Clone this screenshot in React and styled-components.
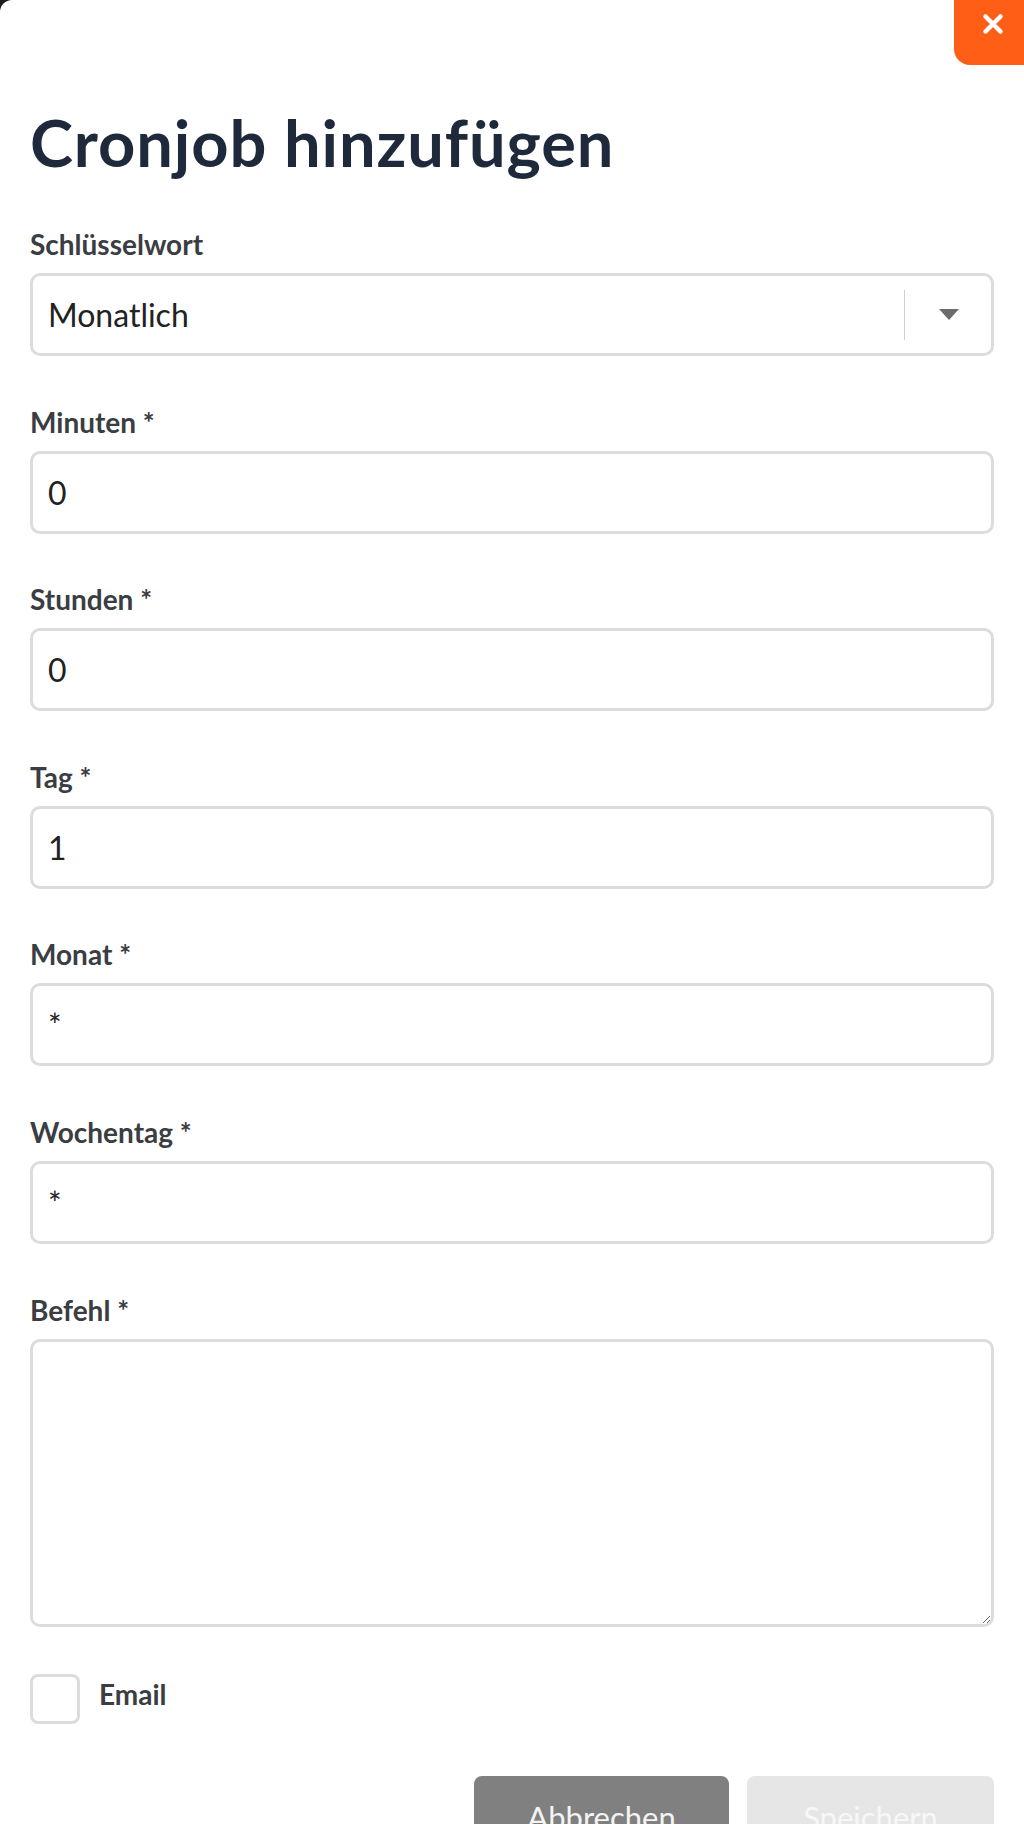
import React from "react";
import styled, { createGlobalStyle } from "styled-components";

const Global = createGlobalStyle`
  html, body { margin: 0; padding: 0; background: #1c1c1c; }
  body { font-family: Lato, "Noto Sans", sans-serif; }
  * { box-sizing: border-box; }
`;

const Modal = styled.div`
  position: relative;
  width: 1024px;
  min-height: 1900px;
  background: #ffffff;
  border-top-left-radius: 12px;
  padding: 105px 30px 60px 30px;
`;

const CloseButton = styled.button`
  position: absolute;
  top: 0;
  right: 0;
  width: 70px;
  height: 65px;
  border: none;
  background: #ff5e17;
  border-bottom-left-radius: 16px;
  display: flex;
  align-items: flex-start;
  justify-content: center;
  padding: 13px 0 0 7px;
  cursor: pointer;
`;

const Title = styled.h1`
  margin: 0 0 49px 0;
  font-family: Lato, sans-serif;
  font-weight: 700;
  font-size: 65px;
  line-height: 74px;
  color: #1e293b;
  letter-spacing: 0.9px;
`;

const Form = styled.div`
  display: flex;
  flex-direction: column;
`;

const Field = styled.div`
  display: flex;
  flex-direction: column;
  margin-bottom: ${(p) => (p.$tight ? "47px" : "49.6px")};
`;

const Label = styled.label`
  font-family: Lato, sans-serif;
  font-weight: 700;
  font-size: 28px;
  line-height: 32px;
  color: #3a3d42;
  margin-bottom: 13px;
`;

const boxStyles = `
  width: 964px;
  border: 3px solid #dcdcdc;
  border-radius: 10px;
  background: #fff;
  font-family: Lato, sans-serif;
  font-size: 32px;
  color: #222;
  outline: none;
`;

const Input = styled.input`
  ${boxStyles}
  height: 83px;
  padding: 0 15px;
`;

const SelectBox = styled.div`
  ${boxStyles}
  height: 83px;
  padding: 0 0 0 15px;
  display: flex;
  align-items: center;
`;

const SelectValue = styled.span`
  flex: 1;
  line-height: 38px;
`;

const Separator = styled.span`
  width: 1px;
  height: 50px;
  background: #cfcfcf;
`;

const ArrowWrap = styled.span`
  width: 86px;
  display: flex;
  align-items: center;
  justify-content: center;
  padding-left: 2px;
`;

const TextArea = styled.textarea`
  ${boxStyles}
  height: 288px;
  padding: 12px 15px;
  resize: vertical;
  display: block;
`;

const CheckRow = styled.label`
  display: flex;
  align-items: flex-start;
  gap: 19px;
  margin-bottom: 52px;
  cursor: pointer;
`;

const CheckBox = styled.span`
  width: 50px;
  height: 50px;
  border: 3px solid #dcdcdc;
  border-radius: 8px;
  background: #fff;
  flex: none;
`;

const CheckText = styled.span`
  font-family: Lato, sans-serif;
  font-weight: 700;
  font-size: 28px;
  line-height: 32px;
  color: #3a3d42;
  margin-top: 4px;
`;

const Actions = styled.div`
  display: flex;
  justify-content: flex-end;
  gap: 18px;
`;

const Button = styled.button`
  height: 82px;
  width: ${(p) => p.$w}px;
  border: none;
  border-radius: 8px;
  background: ${(p) => (p.$primary ? "#e6e6e6" : "#808080")};
  color: ${(p) => (p.$primary ? "#f7f7f7" : "#f4f4f4")};
  font-family: Lato, sans-serif;
  font-size: 31px;
  cursor: pointer;
`;

function Arrow() {
  return (
    <svg width="20" height="11" viewBox="0 0 20 11">
      <path d="M0 0 H20 L10 11 Z" fill="#6b6b6b" />
    </svg>
  );
}

function CloseIcon() {
  return (
    <svg width="22" height="22" viewBox="0 0 22 22">
      <path d="M3.5 3.5 L18.5 18.5 M18.5 3.5 L3.5 18.5" stroke="#fff" strokeWidth="4.5" strokeLinecap="round" />
    </svg>
  );
}

const fields = [
  { label: "Minuten *", value: "0" },
  { label: "Stunden *", value: "0" },
  { label: "Tag *", value: "1" },
  { label: "Monat *", value: "*" },
  { label: "Wochentag *", value: "*" },
];

export default function App() {
  return (
    <>
      <Global />
      <Modal>
        <CloseButton aria-label="Schließen">
          <CloseIcon />
        </CloseButton>
        <Title>Cronjob hinzufügen</Title>
        <Form>
          <Field>
            <Label>Schlüsselwort</Label>
            <SelectBox>
              <SelectValue>Monatlich</SelectValue>
              <Separator />
              <ArrowWrap>
                <Arrow />
              </ArrowWrap>
            </SelectBox>
          </Field>
          {fields.map((f) => (
            <Field key={f.label}>
              <Label>{f.label}</Label>
              <Input defaultValue={f.value} />
            </Field>
          ))}
          <Field $tight>
            <Label>Befehl *</Label>
            <TextArea />
          </Field>
          <CheckRow>
            <CheckBox />
            <CheckText>Email</CheckText>
          </CheckRow>
          <Actions>
            <Button $w={255}>Abbrechen</Button>
            <Button $w={247} $primary>Speichern</Button>
          </Actions>
        </Form>
      </Modal>
    </>
  );
}
